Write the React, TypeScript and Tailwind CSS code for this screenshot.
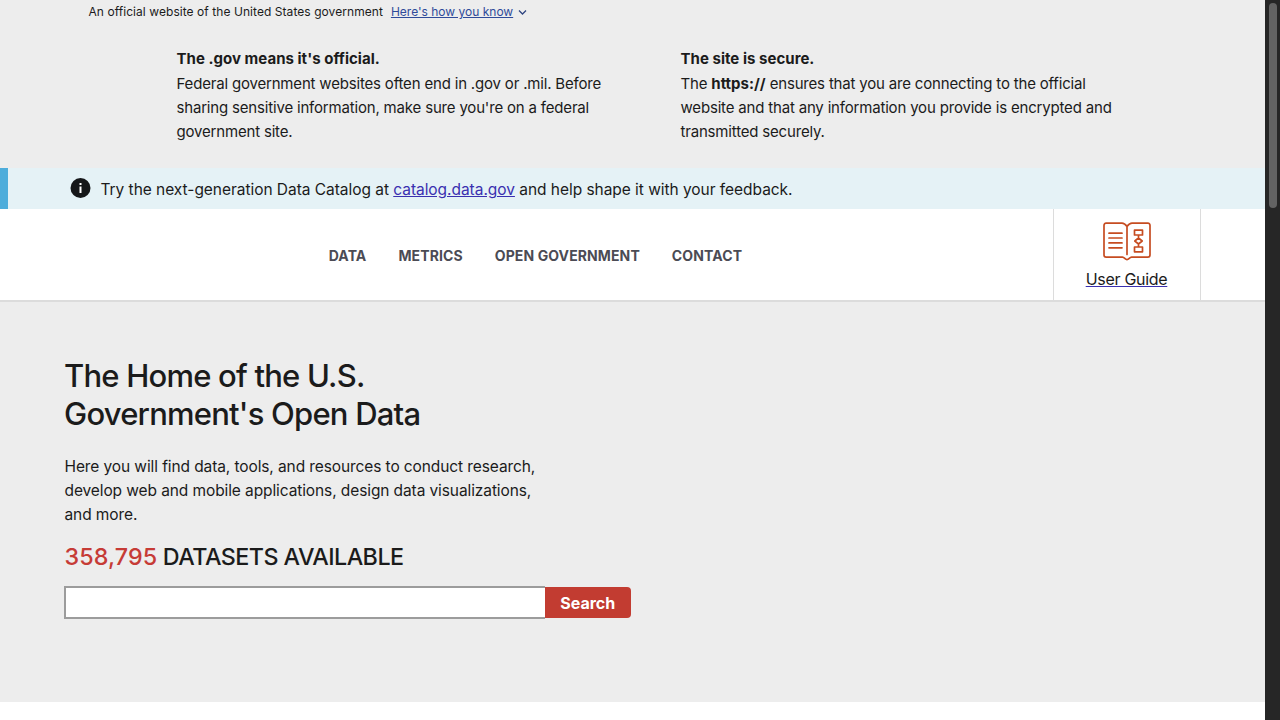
const NAV = ["DATA", "METRICS", "OPEN GOVERNMENT", "CONTACT"];

function GovBanner() {
  return (
    <section className="h-[168px] bg-[#ededed]">
      <div className="flex h-6 items-center pl-[88.5px] text-[12px] leading-4">
        <span className="tracking-[0.06px]">An official website of the United States government</span>
        <a className="ml-2 text-[#2f4b9a] underline">Here's how you know</a>
        <svg className="ml-[5px]" width="9" height="7" viewBox="0 0 9 7" fill="none" stroke="#2f4580" strokeWidth="1.3">
          <path d="M1 1.5 4.5 5 8 1.5" />
        </svg>
      </div>
      <div className="grid grid-cols-[504px_504px] pt-[23px] pl-[176.5px] text-[15px] leading-6">
        <div>
          <p className="font-bold tracking-[0.03px]">The .gov means it's official.</p>
          <p className="pt-px tracking-[-0.18px] whitespace-nowrap">
            Federal government websites often end in .gov or .mil. Before<br />
            sharing sensitive information, make sure you're on a federal<br />
            government site.
          </p>
        </div>
        <div>
          <p className="font-bold tracking-[0.03px]">The site is secure.</p>
          <p className="pt-px tracking-[-0.18px] whitespace-nowrap">
            The <b className="tracking-normal">https://</b> ensures that you are connecting to the official<br />
            website and that any information you provide is encrypted and<br />
            transmitted securely.
          </p>
        </div>
      </div>
    </section>
  );
}

function Alert() {
  return (
    <section className="flex h-[41px] items-center border-l-8 border-[#4eaddb] bg-[#e5f2f6] pl-[62px] text-[15.5px]">
      <svg className="-mt-px" width="21" height="20" viewBox="0 0 21 20">
        <circle cx="10.500" cy="10" r="10" fill="#151719" />
        <path d="M9.500 5h2v2h-2zM9.500 8.500h2V15h-2z" fill="#fff" />
      </svg>
      <p className="ml-[9.5px] pt-[2px] tracking-[-0.04px] whitespace-nowrap">
        Try the next-generation Data Catalog at <a className="text-[#3a30b0] underline">catalog.data.gov</a> and help shape it with your feedback.
      </p>
    </section>
  );
}

function BookIcon() {
  return (
    <svg width="48" height="40" viewBox="0 0 48 40" fill="none" stroke="#c64c21" strokeWidth="1.7" strokeLinejoin="round" strokeLinecap="round">
      <path d="M24 32.500V4.500C22.500 2.500 21 1.200 19 1.200H3.200Q1 1.200 1 3.400V33Q1 35.200 3.200 35.200H19.500C21.500 35.200 22 37.700 24 37.700S26.500 35.200 28.500 35.200H44.800Q47 35.200 47 33V3.400Q47 1.200 44.800 1.200H29C27 1.200 25.500 2.500 24 4.500" />
      <path d="M6 11.200H19M6 16H19M6 20.900H19M6 25.800H19M31.500 8.200H39.500V13H31.500ZM35.500 13V16M35.500 16 39.200 19 35.500 22 31.800 19ZM35.500 22V25M31.500 25H39.500V29.800H31.500Z" />
    </svg>
  );
}

function Header() {
  return (
    <header className="flex h-[93px] border-b-2 border-[#dcdcdc] bg-white">
      <nav className="flex w-[1053px] items-center gap-8 pt-0.5 pl-[328.7px] text-[14px] font-bold tracking-[0.11px] text-[#4b4b54]">
        {NAV.map((label) => (
          <a key={label} className="whitespace-nowrap">{label}</a>
        ))}
      </nav>
      <a className="flex w-[148px] flex-col items-center border-x border-[#dcdcdc] pt-[13px] pr-px text-[16px]">
        <BookIcon />
        <span className="mt-[5px] leading-6 tracking-[-0.3px] underline decoration-[#3a30b0]">User Guide</span>
      </a>
    </header>
  );
}

function Hero() {
  return (
    <main className="h-[400px] bg-[#ededed] pt-[55px] pl-[64px]">
      <h1 className="text-[31px] leading-[38px] font-medium tracking-[-0.79px] whitespace-nowrap">
        The Home of the U.S.<br />Government's Open Data
      </h1>
      <p className="mt-[22px] pl-[0.5px] text-[15.5px] leading-6 tracking-[-0.1px] whitespace-nowrap">
        Here you will find data, tools, and resources to conduct research,<br />
        develop web and mobile applications, design data visualizations,<br />
        and more.
      </p>
      <p className="mt-[12px] pl-[0.5px] text-[23.3px] leading-9 font-[450] tracking-[-0.54px] whitespace-nowrap">
        <span className="text-[#c63b36] tracking-[0.1px]">358,795</span> DATASETS AVAILABLE
      </p>
      <form className="mt-[11px] flex h-[33px]">
        <input className="w-[480.5px] border-y-2 border-l-2 border-[#9c9c9c] bg-white" />
        <div className="flex pb-px pt-[0.5px]">
          <button type="button" className="w-[86.5px] rounded-r bg-[#c23c31] pt-px text-[16px] font-bold text-white">Search</button>
        </div>
      </form>
    </main>
  );
}

export default function App() {
  return (
    <div className="flex h-[720px] w-[1280px] overflow-hidden bg-white font-['Inter',sans-serif] text-[#1b1b1b]">
      <div className="w-[1265px]">
        <GovBanner />
        <Alert />
        <Header />
        <Hero />
      </div>
      <div className="w-[15px] bg-[#262626] pt-[3px] pl-[4px]">
        <div className="h-[205px] w-2 rounded-full bg-[#636363]" />
      </div>
    </div>
  );
}
